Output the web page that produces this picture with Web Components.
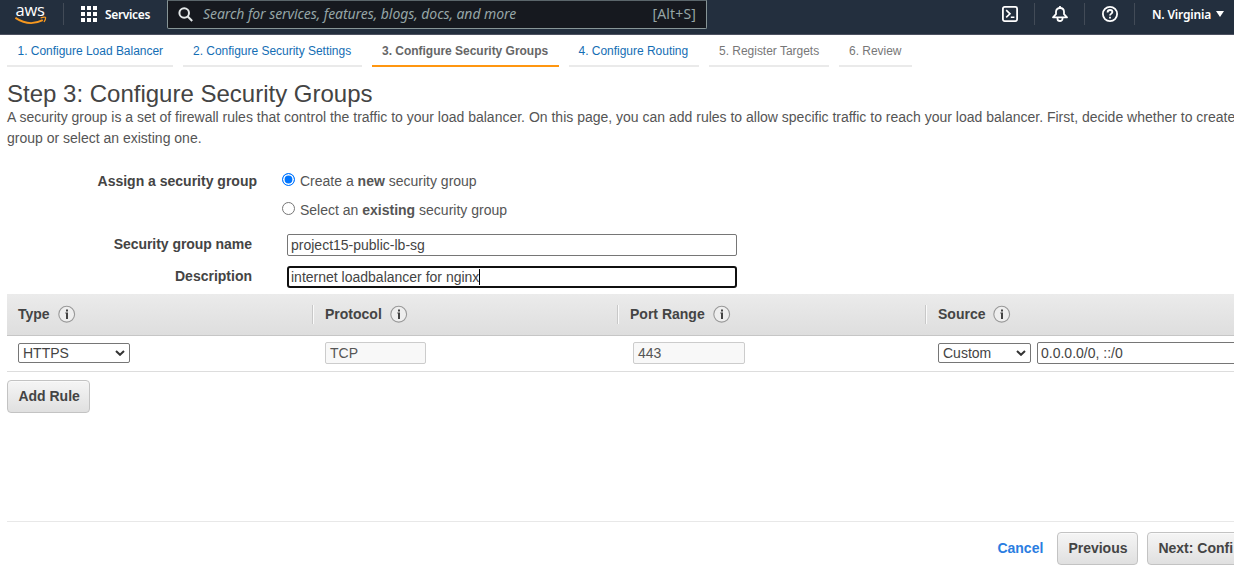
<!DOCTYPE html>
<html lang="en">
<head>
<meta charset="utf-8">
<title>Configure Security Groups</title>
<style>
html,body{margin:0;height:100%;overflow:hidden;background:#fff}
body{font:14px "Liberation Sans",Arial,sans-serif;color:#444}
</style>
</head>
<body>
<sg-page></sg-page>
<script>
function define(name, html) {
  const t = document.createElement('template');
  t.innerHTML = '<style>*{box-sizing:border-box}</style>' + html;
  customElements.define(name, class extends HTMLElement {
    constructor() {
      super();
      this.attachShadow({mode: 'open'}).appendChild(t.content.cloneNode(true));
    }
  });
}

define('aws-logo', `
<style>
:host{display:flex;flex-direction:column;width:32px;height:25px;color:#fff}
span{font:500 16.5px/18px "Open Sans","Noto Sans",sans-serif;height:15px;text-align:center;letter-spacing:-.3px;width:32px;margin-left:-1px}
svg{display:block}
</style>
<span>aws</span>
<svg width="32" height="9" viewBox="0 0 32 9" fill="none"><path d="M.4 1.8Q14 11 27.8 4.2" stroke="#f7981f" stroke-width="1.9"/><path d="M25.6 1.8Q30.4 .6 30.6 1.7Q30.8 3.3 29 6" stroke="#f7981f" stroke-width="1.3"/></svg>`);

define('nav-search', `
<style>
:host{display:flex;width:540px;height:29px;background:#16191f;border:1px solid #879596;border-top-color:#5b666b;border-radius:0 0 2px 2px;align-items:center;padding:0 10px 2px 10px;color:#95a5a6;font:14px "Noto Sans",sans-serif}
svg{margin:1px 10px 0 0}
i{flex:1;letter-spacing:-.07px}
::slotted([slot=key]){letter-spacing:.15px}
</style>
<svg width="15" height="15" viewBox="0 0 15 15" fill="none" stroke="#e3e7e8" stroke-width="2"><circle cx="6.2" cy="6" r="4.8"/><path d="M9.5 9.3L14.2 14"/></svg>
<i><slot></slot></i><slot name="key"></slot>`);

define('nav-bar', `
<style>
:host{display:flex;width:1234px;height:35px;background:#232f3e;border-bottom:1px solid #4c5160;color:#fff;font:600 12px "Noto Sans",sans-serif;align-items:flex-start}
aws-logo{margin:1px 16px 0 15px}
.sep{width:1px;height:22px;margin-top:3px;background:#424b57}
.services{display:flex;align-items:center;height:28px;width:103px;padding-left:17px;gap:8px}
.s{letter-spacing:-.35px}
.r{letter-spacing:-.17px}
.space{flex:1}
.ico{display:flex;width:49px;height:28px;align-items:center;justify-content:center}
.region{display:flex;width:99px;height:28px;align-items:center;padding-left:17px;gap:5px}
svg{display:block;flex:none}
</style>
<aws-logo></aws-logo><div class="sep"></div>
<div class="services"><svg width="16" height="16" fill="#fff"><path d="M0 0h4v4H0zM6 0h4v4H6zM12 0h4v4h-4zM0 6h4v4H0zM6 6h4v4H6zM12 6h4v4h-4zM0 12h4v4H0zM6 12h4v4H6zM12 12h4v4h-4z"/></svg><span class="s">Services</span></div>
<nav-search>Search for services, features, blogs, docs, and more<span slot="key">[Alt+S]</span></nav-search>
<div class="space"></div>
<div class="ico"><svg width="16" height="16" viewBox="0 0 16 16" fill="none" stroke="#fff" stroke-width="1.8"><rect x=".9" y=".9" width="14.2" height="14.2" rx="1.8"/><path d="M4.2 4.2L8 7.8L4.2 11.4M8.8 11.2h3.6" stroke-width="1.6"/></svg></div><div class="sep"></div>
<div class="ico"><svg width="16" height="16" viewBox="0 0 16 16" fill="none" stroke="#fff" stroke-width="1.8"><path d="M1 11.3L4 8.2V5.8C4 3.4 5.8 2 8 2S12 3.4 12 5.8V8.2L15 11.3Z" stroke-linejoin="round"/><path d="M8 0v2M5.5 11.5v1.2a2.5 2.3 0 0 0 5 0V11.5"/></svg></div><div class="sep"></div>
<div class="ico"><svg width="16" height="16" viewBox="0 0 16 16" fill="none" stroke="#fff" stroke-width="1.8"><circle cx="8" cy="8" r="7.1"/><path d="M5.6 6.4C5.6 4.8 6.6 4 8 4S10.4 4.8 10.4 6.1C10.4 7.7 8 7.6 8 9.6M8 10.7v1.7"/></svg></div><div class="sep"></div>
<div class="region"><span class="r">N. Virginia</span><svg width="8" height="6"><path d="M0 0h8L4 6z" fill="#fff"/></svg></div>`);

define('wizard-tab', `
<style>
:host{display:flex;height:32px;padding-left:10.5px;border-bottom:2px solid #eaeaea;font-size:12px;line-height:32px;color:#146eb4;white-space:nowrap;flex:none;letter-spacing:-.02px}
:host([active]){color:#666;font-weight:bold;border-color:#ff9610;padding-left:10px}
:host([off]){color:#777;padding-left:10px}
</style><slot></slot>`);

define('field-row', `
<style>
:host{display:flex;height:32px;align-items:center}
b{width:245px;text-align:right;margin-right:35px;flex:none}
:host([raised]) b{margin-top:-2px}
</style><b><slot name="label"></slot></b><slot></slot>`);

define('text-box', `
<style>
:host{display:flex;align-items:center;height:22px;border:1px solid #767676;border-radius:2px;background:#fff;padding-left:3px;color:#444;flex:none;white-space:nowrap}
:host([off]){border-color:#ccc;background:#f8f8f8;color:#555;padding-left:4px}
:host([focused]){border:2px solid #101010;border-radius:3px;padding-left:2px}
:host([focused])::after{content:"";width:1px;height:16px;background:#000}
</style><slot></slot>`);

define('select-box', `
<style>
:host{display:flex;align-items:center;justify-content:space-between;height:20px;border:1px solid #767676;border-radius:2px;background:#fff;padding:0 4px;flex:none;color:#444}
</style><slot></slot><svg width="10" height="6" viewBox="0 0 10 6" fill="none" stroke="#333" stroke-width="2"><path d="M1 1L5 4.8L9 1"/></svg>`);

define('radio-dot', `
<style>
:host{display:block;width:13px;height:13px;border:1px solid #767676;border-radius:50%;flex:none;margin:-2px 5px 0 0}
:host([checked]){border:1px solid #0075ff;background:#0075ff;box-shadow:inset 0 0 0 1.6px #fff}
</style>`);

define('column-head', `
<style>
:host{display:flex;align-items:center;gap:8px;font-weight:bold;position:relative;height:41px;padding-bottom:1px;flex:none}
:host([line])::before{content:"";position:absolute;left:-13px;top:11px;width:2px;height:19px;background:linear-gradient(90deg,#c8c8c8 50%,#fafafa 50%)}
svg{flex:none}
</style><slot></slot><svg width="18" height="18" viewBox="0 0 18 18"><circle cx="8.7" cy="9.2" r="7.9" fill="#eee" stroke="#999" stroke-width="1.1"/><path d="M8 4.5h2v2H8zM7.3 7.5H10v6.5H8V8.5h-.7z" fill="#444"/></svg>`);

define('push-button', `
<style>
:host{display:flex;align-items:center;height:33px;border:1px solid #c3c3c3;border-radius:4px;background:linear-gradient(#f5f5f5,#e0e0e0);box-shadow:inset 0 1px #fff8;padding-left:10.4px;font-weight:bold;white-space:nowrap;flex:none;color:#444}
</style><slot></slot>`);

define('sg-page', `
<style>
:host{display:flex;flex-direction:column;width:1234px;height:586px;overflow:hidden}
nav-bar{flex:none}
.tabs{display:flex;gap:10px;padding-left:7px;flex:none}
h1{font-weight:normal;font-size:24px;line-height:28px;margin:13px 0 0 7px}
p{margin:-1px 0 0 7px;line-height:21px;white-space:nowrap;color:#555}
.form{margin:17px 0 0 7px}
.radio-label{color:#555}
field-row.radio{height:29px;padding-left:5px}
field-row.radio>radio-dot{margin-left:-10px}
.head{display:flex;margin:1px 0 0 7px;height:42px;background:linear-gradient(#ebebeb,#dedede);border-bottom:1px solid #c6c6c6;flex:none;padding-left:11px}
.row{display:flex;align-items:center;margin-left:7px;height:36px;border-bottom:1px solid #ddd;padding:0 0 1px 11px;flex:none}
.add{margin:8px 0 0 7px;width:83px;padding-bottom:1px}
.foot{display:flex;align-items:center;margin:auto 0 10px 7px;height:55px;border-top:1px solid #e8e8e8;padding:0 0 2px 990.4px;flex:none}
a{color:#2a7de1;font-weight:bold;width:59.6px;flex:none}
</style>
<nav-bar></nav-bar>
<div class="tabs">
<wizard-tab style="width:166px">1. Configure Load Balancer</wizard-tab>
<wizard-tab style="width:179px;padding-left:10px">2. Configure Security Settings</wizard-tab>
<wizard-tab active style="width:187px">3. Configure Security Groups</wizard-tab>
<wizard-tab style="width:130px;padding-left:9.5px">4. Configure Routing</wizard-tab>
<wizard-tab off style="width:120px">5. Register Targets</wizard-tab>
<wizard-tab off style="width:73px">6. Review</wizard-tab>
</div>
<h1>Step 3: Configure Security Groups</h1>
<p>A security group is a set of firewall rules that control the traffic to your load balancer. On this page, you can add rules to allow specific traffic to reach your load balancer. First, decide whether to create<br>group or select an existing one.</p>
<div class="form">
<field-row class="radio"><span slot="label">Assign a security group</span><radio-dot checked></radio-dot><span class="radio-label">Create a <b>new</b> security group</span></field-row>
<field-row class="radio"><radio-dot></radio-dot><span class="radio-label">Select an <b>existing</b> security group</span></field-row>
<field-row raised style="margin-top:5px"><span slot="label" style="letter-spacing:-.05px">Security group name</span><text-box style="width:450px">project15-public-lb-sg</text-box></field-row>
<field-row raised><span slot="label">Description</span><text-box focused style="width:450px">internet loadbalancer for nginx</text-box></field-row>
</div>
<div class="head">
<column-head style="width:307px">Type</column-head><column-head line style="width:305px">Protocol</column-head><column-head line style="width:308px">Port Range</column-head><column-head line>Source</column-head>
</div>
<div class="row">
<select-box style="width:112px;margin-right:195px">HTTPS</select-box><text-box off style="width:101px;margin-right:207px">TCP</text-box><text-box off style="width:112px;margin-right:193px">443</text-box><select-box style="width:93px;margin-right:6px">Custom</select-box><text-box style="width:210px">0.0.0.0/0, ::/0</text-box>
</div>
<push-button class="add">Add Rule</push-button>
<div class="foot"><a>Cancel</a><push-button style="width:81px;margin-right:9px">Previous</push-button><push-button style="width:180px">Next: Confi</push-button></div>`);
</script>
</body>
</html>
